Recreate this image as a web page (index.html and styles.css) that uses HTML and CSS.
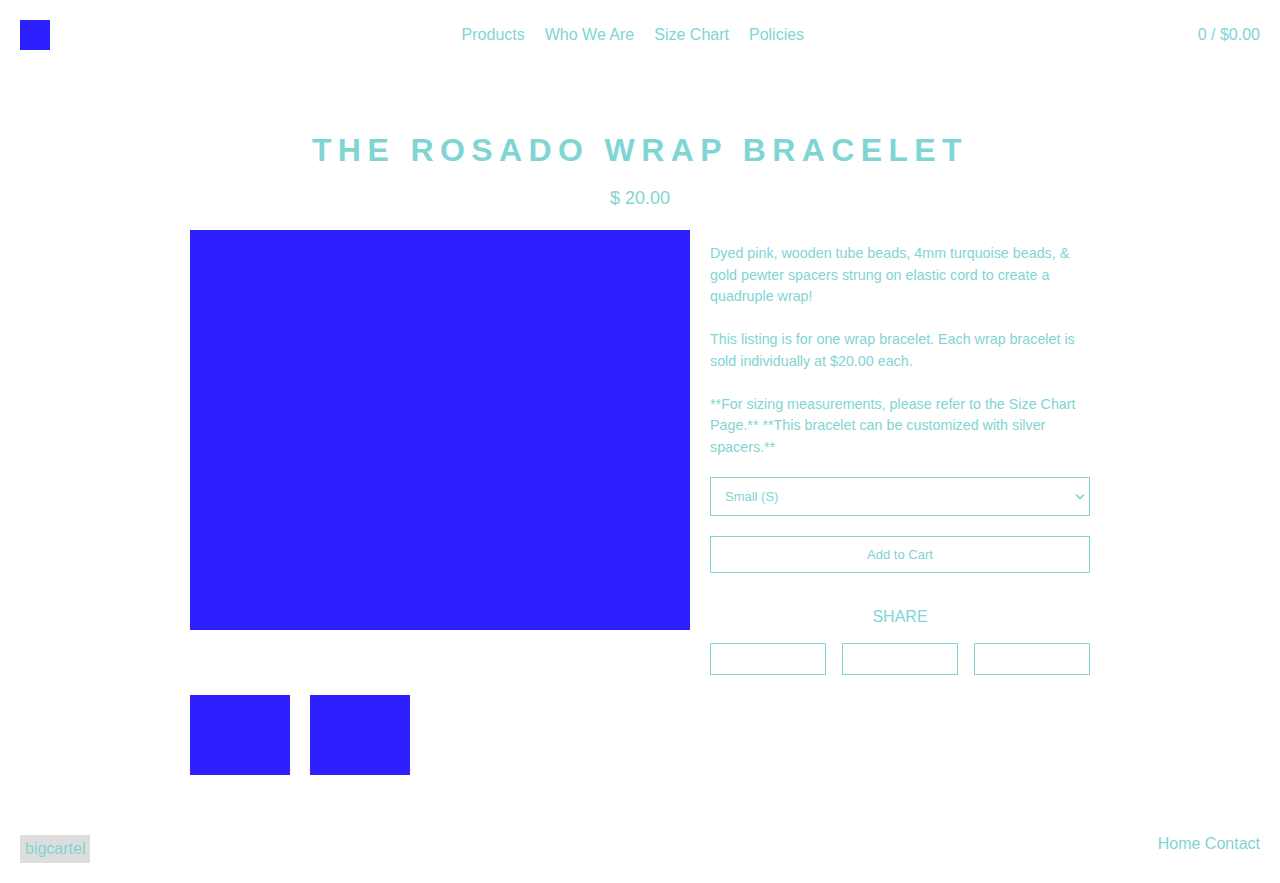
FILE: index.html
```html
<!DOCTYPE html>
<html>
<head>
<meta charset="utf-8">
<link rel="stylesheet" href="styles.css">
</head>
<body>
<header class="header">
  <a class="logo" href="#"></a>
  <nav class="nav">
    <a href="#">Products</a>
    <a href="#">Who We Are</a>
    <a href="#">Size Chart</a>
    <a href="#">Policies</a>
  </nav>
  <a class="cart" href="#">0 / $0.00</a>
</header>
<main class="main">
  <h1 class="title">THE ROSADO WRAP BRACELET</h1>
  <div class="price">$ 20.00</div>
  <div class="product">
    <div class="images">
      <div class="primary"></div>
      <div class="thumbs">
        <div class="thumb"></div>
        <div class="thumb"></div>
      </div>
    </div>
    <div class="details">
      <p>Dyed pink, wooden tube beads, 4mm turquoise beads, &amp; gold pewter spacers strung on elastic cord to create a quadruple wrap!</p>
      <p>This listing is for one wrap bracelet. Each wrap bracelet is sold individually at $20.00 each.</p>
      <p>**For sizing measurements, please refer to the Size Chart Page.** **This bracelet can be customized with silver spacers.**</p>
      <div class="select">
        <span>Small (S)</span>
        <svg width="10" height="7" viewBox="0 0 10 7"><path d="M1 1.5 L5 5.5 L9 1.5" fill="none" stroke="#7fd5d3" stroke-width="1.6"/></svg>
      </div>
      <button class="add">Add to Cart</button>
      <div class="share-label">SHARE</div>
      <div class="share">
        <a href="#"></a>
        <a href="#"></a>
        <a href="#"></a>
      </div>
    </div>
  </div>
</main>
<footer class="footer">
  <a class="badge" href="#">bigcartel</a>
  <div class="flinks"><a href="#">Home</a> <a href="#">Contact</a></div>
</footer>
</body>
</html>
```

FILE: styles.css
```css
* { box-sizing: border-box; }
html, body { margin: 0; padding: 0; }
body {
  font-family: "Liberation Sans", Arial, sans-serif;
  color: #7fd5d3;
  background: #fff;
  width: 1280px;
  min-height: 883px;
  position: relative;
}
a { color: #7fd5d3; text-decoration: none; }
.header {
  display: flex;
  align-items: center;
  justify-content: space-between;
  padding: 20px 20px 0 20px;
  height: 50px;
  font-size: 16px;
}
.logo { display: block; width: 30px; height: 30px; background: #2c20ff; }
.nav { display: flex; gap: 20px; margin-left: 18px; }
.cart { }
.main { width: 900px; margin: 0 auto; padding-top: 80px; }
.title {
  margin: 0;
  text-align: center;
  font-size: 32px;
  font-weight: bold;
  letter-spacing: 6.4px;
  line-height: 40px;
  padding-left: 0;
}
.price { text-align: center; font-size: 18px; margin-top: 18px; line-height: 20px; }
.product { display: flex; gap: 20px; margin-top: 22px; }
.images { width: 500px; }
.primary { width: 500px; height: 400px; background: #2c20ff; }
.thumbs { display: flex; gap: 20px; margin-top: 65px; }
.thumb { width: 100px; height: 80px; background: #2c20ff; }
.details { width: 380px; font-size: 14.3px; line-height: 21.5px; }
.details p { margin: 13px 0 21.5px 0; }
.details p + p { margin-top: 0; }
.details p:last-of-type { margin-bottom: 19px; }
.select {
  margin-top: 0;
  height: 39px;
  border: 1px solid #7fd5d3;
  display: flex;
  align-items: center;
  justify-content: space-between;
  padding: 0 4px 0 14px;
  font-size: 13px;
}
.add {
  display: block;
  width: 100%;
  margin-top: 20px;
  height: 37px;
  border: 1px solid #7fd5d3;
  background: #fff;
  color: #7fd5d3;
  font-family: "Liberation Sans", Arial, sans-serif;
  font-size: 13px;
}
.share-label { text-align: center; font-size: 16px; margin-top: 35px; line-height: 18px; }
.share { display: flex; gap: 16px; margin-top: 17px; }
.share a { flex: 1; height: 32px; border: 1px solid #7fd5d3; display: block; }
.footer {
  display: flex;
  justify-content: space-between;
  align-items: flex-start;
  padding: 0 20px;
  margin-top: 53px;
  font-size: 16px;
}
.badge {
  display: block;
  background: #dddddd;
  padding: 4px 5px;
  line-height: 20px;
  margin-top: 7px;
}
.flinks { line-height: 20px; margin-top: 6px; }
```
